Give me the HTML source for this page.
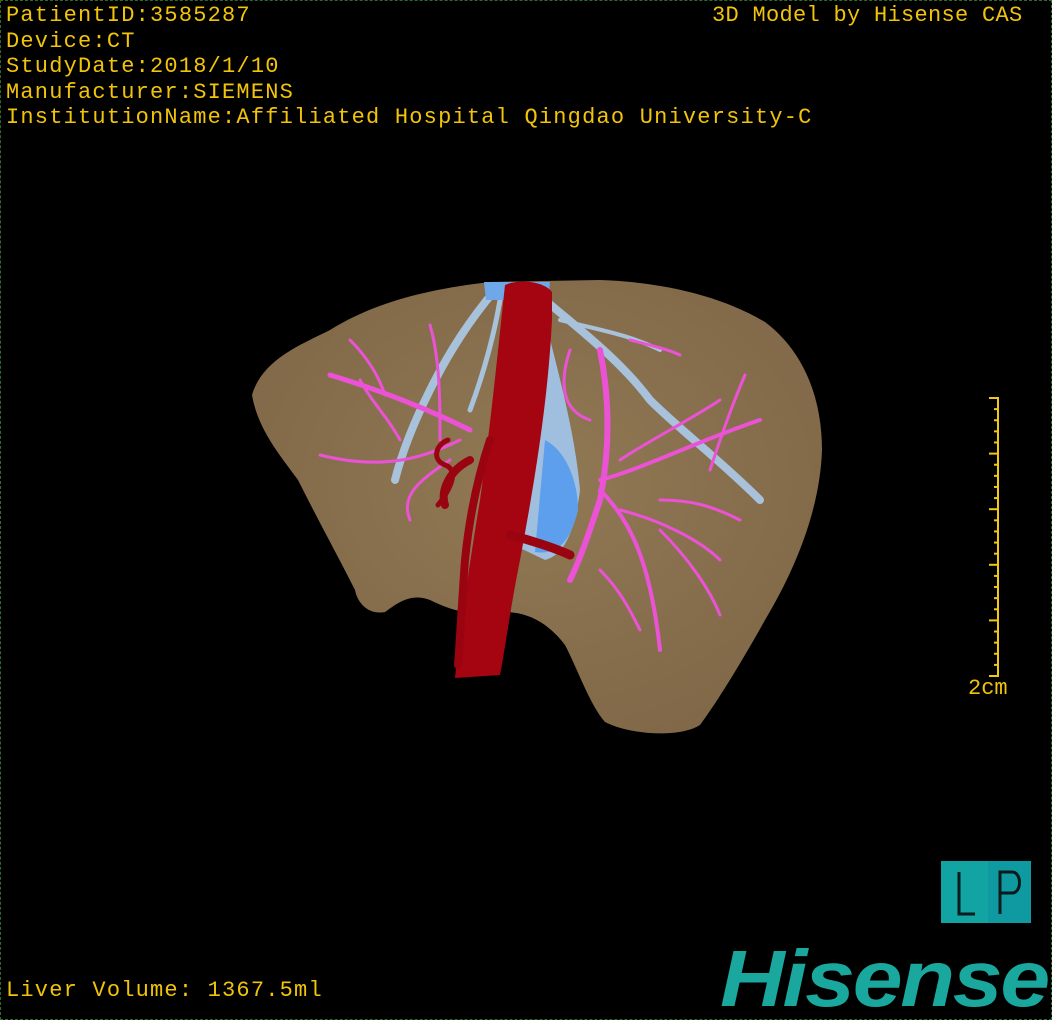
<!DOCTYPE html>
<html><head><meta charset="utf-8"><style>
html,body{margin:0;padding:0;background:#000;}
#c{position:relative;width:1052px;height:1020px;overflow:hidden;background:#000;}
.b{position:absolute;border:1px dashed #2f6a2a;left:0;top:0;width:1050px;height:1018px;}
.t{position:absolute;color:#f1c40a;font-size:22px;line-height:25.5px;white-space:pre;letter-spacing:1.2px;font-family:"Liberation Mono",monospace;}
</style></head><body><div id="c">
<div class="b"></div>
<svg width="1052" height="1020" style="position:absolute;left:0;top:0">
<defs>
<radialGradient id="lg" cx="0.5" cy="0.45" r="0.6"><stop offset="0" stop-color="#917955"/><stop offset="1" stop-color="#806848"/></radialGradient>
</defs>
<path d="M252,395 C262,360 300,345 330,330 C370,305 420,290 490,282 L600,280 C660,282 720,295 765,322 C805,352 822,400 822,450 C820,510 795,570 765,620 C740,665 715,705 700,725 C680,738 630,735 605,722 C590,705 578,670 565,645 C550,625 530,612 505,612 C480,615 460,615 430,600 C410,592 395,605 385,612 C370,615 358,605 355,590 C340,560 318,520 298,480 C280,455 258,430 252,395 Z" fill="url(#lg)"/>
<g stroke="#a8c2dc" fill="none" stroke-linecap="round">
<path d="M495,290 C470,320 450,350 430,390 C410,430 400,460 395,480" stroke-width="8"/>
<path d="M500,300 C495,330 485,370 470,410" stroke-width="5"/>
<path d="M545,300 C580,330 620,360 650,400 C680,430 720,460 760,500" stroke-width="8"/>
<path d="M560,320 C600,330 630,335 660,350" stroke-width="4"/>
</g>
<path d="M540,300 C555,360 575,430 580,490 C575,530 565,555 545,560 L520,548 L535,380 Z" fill="#a0bede"/>
<path d="M545,440 C565,450 578,480 578,510 C570,545 555,555 535,552 Z" fill="#5d9fec"/>
<path d="M484,282 L550,282 L548,300 L486,300 Z" fill="#6fa8e8"/>
<g stroke="#ec52d6" fill="none" stroke-linecap="round">
<path d="M470,430 C430,410 380,390 330,375" stroke-width="5"/>
<path d="M460,440 C420,460 380,470 320,455" stroke-width="3"/>
<path d="M440,440 C440,400 440,360 430,325" stroke-width="3"/>
<path d="M450,460 C420,480 400,495 410,520" stroke-width="3"/>
<path d="M360,380 C370,400 390,420 400,440" stroke-width="3"/>
<path d="M350,340 C370,360 380,380 385,395" stroke-width="3"/>
<path d="M600,350 C610,400 610,450 600,500 C590,530 580,560 570,580" stroke-width="6"/>
<path d="M600,480 C640,470 700,440 760,420" stroke-width="4"/>
<path d="M600,490 C630,520 650,560 660,650" stroke-width="4"/>
<path d="M620,510 C660,520 700,540 720,560" stroke-width="3"/>
<path d="M660,530 C690,560 710,590 720,615" stroke-width="3"/>
<path d="M620,460 C650,440 690,420 720,400" stroke-width="3"/>
<path d="M710,470 C720,440 730,410 745,375" stroke-width="3"/>
<path d="M630,340 C650,345 670,350 680,355" stroke-width="3"/>
<path d="M590,420 C560,410 560,380 570,350" stroke-width="3"/>
<path d="M600,570 C620,590 630,610 640,630" stroke-width="3"/>
<path d="M660,500 C690,500 710,505 740,520" stroke-width="3"/>
</g>
<path d="M505,285 C520,278 545,282 552,292 L552,320 C548,400 535,480 520,560 C510,610 505,650 500,675 L455,678 C460,630 470,560 480,500 C490,430 498,350 505,285 Z" fill="#a40511"/>
<g stroke="#9a0410" fill="none" stroke-linecap="round">
<path d="M490,440 C480,470 470,510 465,560 C462,600 460,640 458,665" stroke-width="8"/>
<path d="M470,460 C450,470 440,490 445,505" stroke-width="8"/>
<path d="M448,440 C435,445 432,460 445,465 C460,470 450,490 438,505" stroke-width="5"/>
<path d="M510,535 C530,540 555,548 570,555" stroke-width="9"/>
</g>
<g stroke="#f0c816" stroke-width="2">
<line x1="998" y1="397" x2="998" y2="677"/>
<line x1="989" y1="398" x2="998" y2="398"/>
<line x1="989" y1="676" x2="998" y2="676"/>
</g>
<g stroke="#f0c816" stroke-width="2" id="ticks"></g>
<rect x="941" y="861" width="90" height="62" fill="#12a3a3"/>
<rect x="988" y="861" width="43" height="62" fill="#0e9aa0"/>
<g stroke="#0a1a1a" stroke-width="3" fill="none">
<path d="M959,872 L959,914 L975,914"/>
<path d="M1000,914 L1000,872 L1012,872 C1022,872 1022,893 1012,893 L1000,893"/>
</g>
</svg>
<div class="t" style="left:6px;top:3px">PatientID:3585287
Device:CT
StudyDate:2018/1/10
Manufacturer:SIEMENS
InstitutionName:Affiliated Hospital Qingdao University-C</div>
<div class="t" style="left:712px;top:3px;letter-spacing:0.3px">3D Model by Hisense CAS</div>
<div class="t" style="left:968px;top:676px;letter-spacing:0">2cm</div>
<div class="t" style="left:6px;top:978px">Liver Volume: 1367.5ml</div>
<div style="position:absolute;left:720px;top:934px;font:italic bold 80px 'Liberation Sans',sans-serif;color:#1aa89e;letter-spacing:-2px;line-height:90px;transform:scaleX(1.12);transform-origin:left">Hisense</div>
<script>
var g=document.getElementById('ticks'),s='';
for(var i=1;i<25;i++){var y=398+i*278/25;var x=(i%5==0)?989:994;s+='<line x1="'+x+'" y1="'+y+'" x2="998" y2="'+y+'"/>';}
g.innerHTML=s;
</script>
</div></body></html>
